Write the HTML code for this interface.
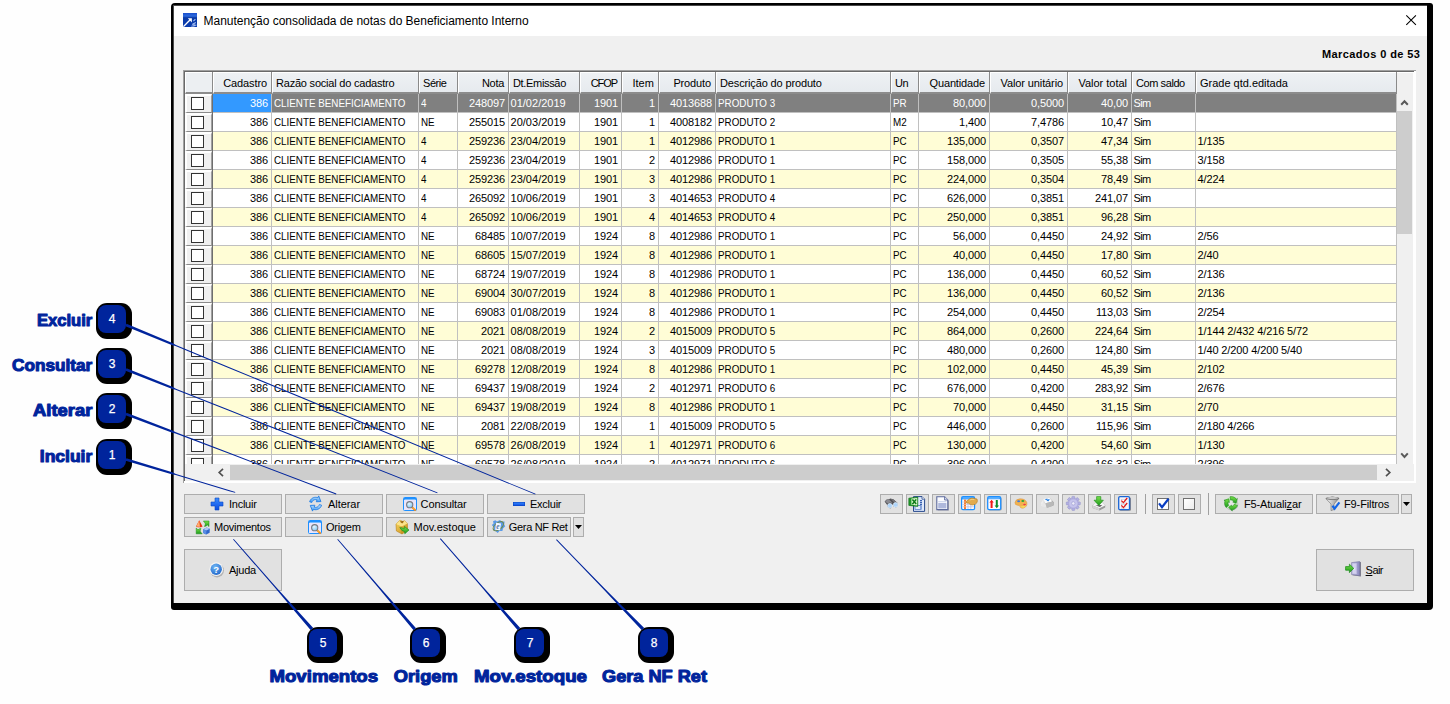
<!DOCTYPE html>
<html lang="pt-BR">
<head>
<meta charset="utf-8">
<title>Manutenção consolidada de notas do Beneficiamento Interno</title>
<style>
*{box-sizing:border-box;margin:0;padding:0}
html,body{width:1450px;height:704px;overflow:hidden;background:#fefefe}
body{position:relative;font-family:"Liberation Sans",sans-serif;font-size:11px;color:#000}
.abs{position:absolute}
/* window */
#win{position:absolute;left:171px;top:3px;width:1262px;height:607px;background:#000;border-radius:4px 3px 4px 3px}
#client{position:absolute;left:174px;top:6px;width:1253px;height:597px;background:#f0f0f0}
#tbar{position:absolute;left:174px;top:6px;width:1253px;height:30px;background:#fff}
#title{position:absolute;left:203.5px;top:14px;font-size:12px;line-height:15px;white-space:nowrap;letter-spacing:-0.02px}
#marc{position:absolute;right:30px;top:47px;font-weight:bold;font-size:11px;line-height:14px;white-space:nowrap;letter-spacing:0.42px;margin-right:-0.4px}
/* grid frame */
#gframe{position:absolute;left:183px;top:70px;width:1233px;height:413px;background:#fff;border-top:1px solid #a0a0a0;border-left:1px solid #a0a0a0}
#gframe2{position:absolute;left:184px;top:71px;width:1230px;height:410px;border-top:1px solid #696969;border-left:1px solid #696969;background:#fff}
.grid{position:absolute;left:185px;top:72px;width:1212px;height:392px;overflow:hidden;background:#fff}
.hd{position:absolute;top:0;height:22px;background:linear-gradient(#eef1f4,#e6eaee);border-left:1px solid #fff;border-top:1px solid #fff;border-bottom:2px solid #8c8c8c;line-height:20px;white-space:nowrap;overflow:hidden;padding:0 3px;letter-spacing:-0.2px}
.hd.r{text-align:right;padding-right:4px}
.hd.ind{background:#eceff2}
.hs{position:absolute;top:0;width:1px;height:22px;background:#8a8a8a}
.row{position:absolute;left:0;width:1211px;height:19px;border-bottom:1px solid #c0c0c0}
.row.yl{background:#fffdd6}
.row.wh{background:#fff}
.row.sel{background:#808080;color:#fff}
.c{position:absolute;top:0;height:18px;line-height:18px;white-space:nowrap;overflow:hidden;border-right:0;padding:0 2px 0 1.5px}
.c::after{content:"";position:absolute;right:-1px;top:0;width:1px;height:19px;background:#c0c0c0}
.row .c{overflow:visible}
.c.r{text-align:right;padding-right:3px}
.c.u{letter-spacing:0}
.c.u b{font-weight:normal;display:inline-block;transform-origin:0 50%;transform:scaleX(.893)}
.c.n{letter-spacing:-0.12px}
.c.d{letter-spacing:0.02px}
.c.m{letter-spacing:-0.65px}
.c.cad{background:#3399ff}
.ic{position:absolute;left:0;top:0;width:27px;height:19px;background:#f0f0f0;border-left:2px solid #fff;border-top:2px solid #fff;border-right:1px solid #a0a0a0;border-bottom:1px solid #8a8a8a}
.ic i{position:absolute;left:4px;top:1px;width:13px;height:13px;border:1px solid #333;background:#fff}
.ic::after{content:"";position:absolute;left:25px;top:-2px;width:1px;height:19px;background:#6e6e6e}
/* scrollbars */
#vs{position:absolute;left:1397px;top:73px;width:16px;height:391px;background:#f0f0f0}
#vth{position:absolute;left:1397px;top:111px;width:15px;height:123px;background:#cdcdcd}
#hs{position:absolute;left:185px;top:464px;width:1229px;height:17px;background:#f0f0f0}
#hth{position:absolute;left:230px;top:465px;width:1147px;height:15px;background:#cdcdcd}
/* buttons */
.b{position:absolute;height:20px;background:#e1e1e1;border:1px solid #adadad;white-space:nowrap;line-height:18px;text-align:center;letter-spacing:-0.25px}
.b.big{height:42px;line-height:40px}
.sep{position:absolute;top:494px;width:1px;height:20px;background:#a0a0a0}
svg{position:absolute;overflow:visible}
.lbl{position:absolute;font-weight:bold;font-size:18px;line-height:20px;color:#00249c;white-space:nowrap;letter-spacing:-1px;-webkit-text-stroke:0.9px #00249c}

.t{position:absolute;font-size:11px;line-height:14px;white-space:nowrap;letter-spacing:-0.25px;color:#000}
.t u{text-decoration:underline;text-underline-offset:1px}
.bdg{position:absolute;width:36px;height:36px}
.bsh{position:absolute;left:0;top:0;width:36px;height:36px;background:#000;border-radius:11px}
.bbl{position:absolute;left:2px;top:2px;width:28px;height:28px;background:#00249c;border-radius:8px;color:#fff;font-size:12px;line-height:29px;text-align:center;-webkit-text-stroke:0.25px #fff}
.lbl.c{text-align:center}
</style>
</head>
<body>
<div id="win"></div>
<div id="client"></div>
<div id="tbar"></div>
<div class="abs" style="left:173px;top:5px;width:1px;height:598px;background:#4a4a4a"></div>
<div class="abs" style="left:174px;top:5px;width:1253px;height:1px;background:#4a4a4a"></div>
<svg style="left:183px;top:13px" width="14" height="14" viewBox="0 0 14 14"><defs><linearGradient id="gt" x1="0" y1="0" x2="0" y2="1"><stop offset="0" stop-color="#1a4fcc"/><stop offset=".22" stop-color="#2e6ade"/><stop offset=".34" stop-color="#0b3aa6"/><stop offset="1" stop-color="#0a3cae"/></linearGradient></defs><path d="M0 0 H14 V14 H1.2 L0 12.8 Z" fill="url(#gt)"/><path d="M0.8 13.2 L7.2 6.8" stroke="#fff" stroke-width="1.3"/><path d="M4.8 5.2 H8.9 V9.4 Z" fill="#fff"/><path d="M10.4 8.2 L12.4 6.2 M9.2 11.4 L12.8 9.6 M8.4 13.2 L13.4 12 M11 10 V13.6" stroke="#a9c2f2" stroke-width="1.1"/></svg>
<div id="title">Manutenção consolidada de notas do Beneficiamento Interno</div>
<svg style="left:1406px;top:15px" width="10" height="10" viewBox="0 0 10 10"><path d="M0.3 0.3 L9.9 9.9 M9.9 0.3 L0.3 9.9" stroke="#000" stroke-width="1.05" fill="none"/></svg>
<div id="marc">Marcados 0 de 53</div>
<div id="gframe"></div>
<div id="gframe2"></div>
<div class="grid">
<div class="hd ind" style="left:0;width:27px"></div>
<div class="hs" style="left:27px"></div>
<div class="hd r" style="left:28px;width:58px;letter-spacing:-0.10px"><span>Cadastro</span></div>
<div class="hs" style="left:86px"></div>
<div class="hd l" style="left:87px;width:146px;letter-spacing:-0.21px"><span>Razão social do cadastro</span></div>
<div class="hs" style="left:233px"></div>
<div class="hd l" style="left:234px;width:38px;letter-spacing:-0.46px"><span>Série</span></div>
<div class="hs" style="left:272px"></div>
<div class="hd r" style="left:273px;width:50px;letter-spacing:-0.30px"><span>Nota</span></div>
<div class="hs" style="left:323px"></div>
<div class="hd l" style="left:324px;width:70px;letter-spacing:-0.33px"><span>Dt.Emissão</span></div>
<div class="hs" style="left:394px"></div>
<div class="hd r" style="left:395px;width:41px;letter-spacing:-1.05px"><span>CFOP</span></div>
<div class="hs" style="left:436px"></div>
<div class="hd r" style="left:437px;width:36px;letter-spacing:0.05px"><span>Item</span></div>
<div class="hs" style="left:473px"></div>
<div class="hd r" style="left:474px;width:56px;letter-spacing:-0.13px"><span>Produto</span></div>
<div class="hs" style="left:530px"></div>
<div class="hd l" style="left:531px;width:174px;letter-spacing:-0.14px"><span>Descrição do produto</span></div>
<div class="hs" style="left:705px"></div>
<div class="hd l" style="left:706px;width:27px;letter-spacing:-0.45px"><span>Un</span></div>
<div class="hs" style="left:733px"></div>
<div class="hd r" style="left:734px;width:70px;letter-spacing:-0.14px"><span>Quantidade</span></div>
<div class="hs" style="left:804px"></div>
<div class="hd r" style="left:805px;width:77px;letter-spacing:-0.11px"><span>Valor unitário</span></div>
<div class="hs" style="left:882px"></div>
<div class="hd r" style="left:883px;width:63px;letter-spacing:-0.01px"><span>Valor total</span></div>
<div class="hs" style="left:946px"></div>
<div class="hd l" style="left:947px;width:63px;letter-spacing:-0.42px"><span>Com saldo</span></div>
<div class="hs" style="left:1010px"></div>
<div class="hd l" style="left:1011px;width:200px;letter-spacing:-0.01px"><span>Grade qtd.editada</span></div>
<div class="hs" style="left:1211px"></div>
<div class="row sel" style="top:22px">
<div class="ic"><i></i></div>
<div class="c r n cad" style="left:28px;width:58px">386</div>
<div class="c l u" style="left:87px;width:146px"><b>CLIENTE BENEFICIAMENTO</b></div>
<div class="c l u" style="left:234px;width:38px"><b>4</b></div>
<div class="c r n" style="left:273px;width:50px">248097</div>
<div class="c l d" style="left:324px;width:70px">01/02/2019</div>
<div class="c r n" style="left:395px;width:41px">1901</div>
<div class="c r n" style="left:437px;width:36px">1</div>
<div class="c r n" style="left:474px;width:56px">4013688</div>
<div class="c l u" style="left:531px;width:174px"><b>PRODUTO 3</b></div>
<div class="c l u" style="left:706px;width:27px"><b>PR</b></div>
<div class="c r n" style="left:734px;width:70px">80,000</div>
<div class="c r n" style="left:805px;width:77px">0,5000</div>
<div class="c r n" style="left:883px;width:63px">40,00</div>
<div class="c l m" style="left:947px;width:63px">Sim</div>
<div class="c l n" style="left:1011px;width:200px"></div>
</div>
<div class="row wh" style="top:41px">
<div class="ic"><i></i></div>
<div class="c r n" style="left:28px;width:58px">386</div>
<div class="c l u" style="left:87px;width:146px"><b>CLIENTE BENEFICIAMENTO</b></div>
<div class="c l u" style="left:234px;width:38px"><b>NE</b></div>
<div class="c r n" style="left:273px;width:50px">255015</div>
<div class="c l d" style="left:324px;width:70px">20/03/2019</div>
<div class="c r n" style="left:395px;width:41px">1901</div>
<div class="c r n" style="left:437px;width:36px">1</div>
<div class="c r n" style="left:474px;width:56px">4008182</div>
<div class="c l u" style="left:531px;width:174px"><b>PRODUTO 2</b></div>
<div class="c l u" style="left:706px;width:27px"><b>M2</b></div>
<div class="c r n" style="left:734px;width:70px">1,400</div>
<div class="c r n" style="left:805px;width:77px">7,4786</div>
<div class="c r n" style="left:883px;width:63px">10,47</div>
<div class="c l m" style="left:947px;width:63px">Sim</div>
<div class="c l n" style="left:1011px;width:200px"></div>
</div>
<div class="row yl" style="top:60px">
<div class="ic"><i></i></div>
<div class="c r n" style="left:28px;width:58px">386</div>
<div class="c l u" style="left:87px;width:146px"><b>CLIENTE BENEFICIAMENTO</b></div>
<div class="c l u" style="left:234px;width:38px"><b>4</b></div>
<div class="c r n" style="left:273px;width:50px">259236</div>
<div class="c l d" style="left:324px;width:70px">23/04/2019</div>
<div class="c r n" style="left:395px;width:41px">1901</div>
<div class="c r n" style="left:437px;width:36px">1</div>
<div class="c r n" style="left:474px;width:56px">4012986</div>
<div class="c l u" style="left:531px;width:174px"><b>PRODUTO 1</b></div>
<div class="c l u" style="left:706px;width:27px"><b>PC</b></div>
<div class="c r n" style="left:734px;width:70px">135,000</div>
<div class="c r n" style="left:805px;width:77px">0,3507</div>
<div class="c r n" style="left:883px;width:63px">47,34</div>
<div class="c l m" style="left:947px;width:63px">Sim</div>
<div class="c l n" style="left:1011px;width:200px">1/135</div>
</div>
<div class="row wh" style="top:79px">
<div class="ic"><i></i></div>
<div class="c r n" style="left:28px;width:58px">386</div>
<div class="c l u" style="left:87px;width:146px"><b>CLIENTE BENEFICIAMENTO</b></div>
<div class="c l u" style="left:234px;width:38px"><b>4</b></div>
<div class="c r n" style="left:273px;width:50px">259236</div>
<div class="c l d" style="left:324px;width:70px">23/04/2019</div>
<div class="c r n" style="left:395px;width:41px">1901</div>
<div class="c r n" style="left:437px;width:36px">2</div>
<div class="c r n" style="left:474px;width:56px">4012986</div>
<div class="c l u" style="left:531px;width:174px"><b>PRODUTO 1</b></div>
<div class="c l u" style="left:706px;width:27px"><b>PC</b></div>
<div class="c r n" style="left:734px;width:70px">158,000</div>
<div class="c r n" style="left:805px;width:77px">0,3505</div>
<div class="c r n" style="left:883px;width:63px">55,38</div>
<div class="c l m" style="left:947px;width:63px">Sim</div>
<div class="c l n" style="left:1011px;width:200px">3/158</div>
</div>
<div class="row yl" style="top:98px">
<div class="ic"><i></i></div>
<div class="c r n" style="left:28px;width:58px">386</div>
<div class="c l u" style="left:87px;width:146px"><b>CLIENTE BENEFICIAMENTO</b></div>
<div class="c l u" style="left:234px;width:38px"><b>4</b></div>
<div class="c r n" style="left:273px;width:50px">259236</div>
<div class="c l d" style="left:324px;width:70px">23/04/2019</div>
<div class="c r n" style="left:395px;width:41px">1901</div>
<div class="c r n" style="left:437px;width:36px">3</div>
<div class="c r n" style="left:474px;width:56px">4012986</div>
<div class="c l u" style="left:531px;width:174px"><b>PRODUTO 1</b></div>
<div class="c l u" style="left:706px;width:27px"><b>PC</b></div>
<div class="c r n" style="left:734px;width:70px">224,000</div>
<div class="c r n" style="left:805px;width:77px">0,3504</div>
<div class="c r n" style="left:883px;width:63px">78,49</div>
<div class="c l m" style="left:947px;width:63px">Sim</div>
<div class="c l n" style="left:1011px;width:200px">4/224</div>
</div>
<div class="row wh" style="top:117px">
<div class="ic"><i></i></div>
<div class="c r n" style="left:28px;width:58px">386</div>
<div class="c l u" style="left:87px;width:146px"><b>CLIENTE BENEFICIAMENTO</b></div>
<div class="c l u" style="left:234px;width:38px"><b>4</b></div>
<div class="c r n" style="left:273px;width:50px">265092</div>
<div class="c l d" style="left:324px;width:70px">10/06/2019</div>
<div class="c r n" style="left:395px;width:41px">1901</div>
<div class="c r n" style="left:437px;width:36px">3</div>
<div class="c r n" style="left:474px;width:56px">4014653</div>
<div class="c l u" style="left:531px;width:174px"><b>PRODUTO 4</b></div>
<div class="c l u" style="left:706px;width:27px"><b>PC</b></div>
<div class="c r n" style="left:734px;width:70px">626,000</div>
<div class="c r n" style="left:805px;width:77px">0,3851</div>
<div class="c r n" style="left:883px;width:63px">241,07</div>
<div class="c l m" style="left:947px;width:63px">Sim</div>
<div class="c l n" style="left:1011px;width:200px"></div>
</div>
<div class="row yl" style="top:136px">
<div class="ic"><i></i></div>
<div class="c r n" style="left:28px;width:58px">386</div>
<div class="c l u" style="left:87px;width:146px"><b>CLIENTE BENEFICIAMENTO</b></div>
<div class="c l u" style="left:234px;width:38px"><b>4</b></div>
<div class="c r n" style="left:273px;width:50px">265092</div>
<div class="c l d" style="left:324px;width:70px">10/06/2019</div>
<div class="c r n" style="left:395px;width:41px">1901</div>
<div class="c r n" style="left:437px;width:36px">4</div>
<div class="c r n" style="left:474px;width:56px">4014653</div>
<div class="c l u" style="left:531px;width:174px"><b>PRODUTO 4</b></div>
<div class="c l u" style="left:706px;width:27px"><b>PC</b></div>
<div class="c r n" style="left:734px;width:70px">250,000</div>
<div class="c r n" style="left:805px;width:77px">0,3851</div>
<div class="c r n" style="left:883px;width:63px">96,28</div>
<div class="c l m" style="left:947px;width:63px">Sim</div>
<div class="c l n" style="left:1011px;width:200px"></div>
</div>
<div class="row wh" style="top:155px">
<div class="ic"><i></i></div>
<div class="c r n" style="left:28px;width:58px">386</div>
<div class="c l u" style="left:87px;width:146px"><b>CLIENTE BENEFICIAMENTO</b></div>
<div class="c l u" style="left:234px;width:38px"><b>NE</b></div>
<div class="c r n" style="left:273px;width:50px">68485</div>
<div class="c l d" style="left:324px;width:70px">10/07/2019</div>
<div class="c r n" style="left:395px;width:41px">1924</div>
<div class="c r n" style="left:437px;width:36px">8</div>
<div class="c r n" style="left:474px;width:56px">4012986</div>
<div class="c l u" style="left:531px;width:174px"><b>PRODUTO 1</b></div>
<div class="c l u" style="left:706px;width:27px"><b>PC</b></div>
<div class="c r n" style="left:734px;width:70px">56,000</div>
<div class="c r n" style="left:805px;width:77px">0,4450</div>
<div class="c r n" style="left:883px;width:63px">24,92</div>
<div class="c l m" style="left:947px;width:63px">Sim</div>
<div class="c l n" style="left:1011px;width:200px">2/56</div>
</div>
<div class="row yl" style="top:174px">
<div class="ic"><i></i></div>
<div class="c r n" style="left:28px;width:58px">386</div>
<div class="c l u" style="left:87px;width:146px"><b>CLIENTE BENEFICIAMENTO</b></div>
<div class="c l u" style="left:234px;width:38px"><b>NE</b></div>
<div class="c r n" style="left:273px;width:50px">68605</div>
<div class="c l d" style="left:324px;width:70px">15/07/2019</div>
<div class="c r n" style="left:395px;width:41px">1924</div>
<div class="c r n" style="left:437px;width:36px">8</div>
<div class="c r n" style="left:474px;width:56px">4012986</div>
<div class="c l u" style="left:531px;width:174px"><b>PRODUTO 1</b></div>
<div class="c l u" style="left:706px;width:27px"><b>PC</b></div>
<div class="c r n" style="left:734px;width:70px">40,000</div>
<div class="c r n" style="left:805px;width:77px">0,4450</div>
<div class="c r n" style="left:883px;width:63px">17,80</div>
<div class="c l m" style="left:947px;width:63px">Sim</div>
<div class="c l n" style="left:1011px;width:200px">2/40</div>
</div>
<div class="row wh" style="top:193px">
<div class="ic"><i></i></div>
<div class="c r n" style="left:28px;width:58px">386</div>
<div class="c l u" style="left:87px;width:146px"><b>CLIENTE BENEFICIAMENTO</b></div>
<div class="c l u" style="left:234px;width:38px"><b>NE</b></div>
<div class="c r n" style="left:273px;width:50px">68724</div>
<div class="c l d" style="left:324px;width:70px">19/07/2019</div>
<div class="c r n" style="left:395px;width:41px">1924</div>
<div class="c r n" style="left:437px;width:36px">8</div>
<div class="c r n" style="left:474px;width:56px">4012986</div>
<div class="c l u" style="left:531px;width:174px"><b>PRODUTO 1</b></div>
<div class="c l u" style="left:706px;width:27px"><b>PC</b></div>
<div class="c r n" style="left:734px;width:70px">136,000</div>
<div class="c r n" style="left:805px;width:77px">0,4450</div>
<div class="c r n" style="left:883px;width:63px">60,52</div>
<div class="c l m" style="left:947px;width:63px">Sim</div>
<div class="c l n" style="left:1011px;width:200px">2/136</div>
</div>
<div class="row yl" style="top:212px">
<div class="ic"><i></i></div>
<div class="c r n" style="left:28px;width:58px">386</div>
<div class="c l u" style="left:87px;width:146px"><b>CLIENTE BENEFICIAMENTO</b></div>
<div class="c l u" style="left:234px;width:38px"><b>NE</b></div>
<div class="c r n" style="left:273px;width:50px">69004</div>
<div class="c l d" style="left:324px;width:70px">30/07/2019</div>
<div class="c r n" style="left:395px;width:41px">1924</div>
<div class="c r n" style="left:437px;width:36px">8</div>
<div class="c r n" style="left:474px;width:56px">4012986</div>
<div class="c l u" style="left:531px;width:174px"><b>PRODUTO 1</b></div>
<div class="c l u" style="left:706px;width:27px"><b>PC</b></div>
<div class="c r n" style="left:734px;width:70px">136,000</div>
<div class="c r n" style="left:805px;width:77px">0,4450</div>
<div class="c r n" style="left:883px;width:63px">60,52</div>
<div class="c l m" style="left:947px;width:63px">Sim</div>
<div class="c l n" style="left:1011px;width:200px">2/136</div>
</div>
<div class="row wh" style="top:231px">
<div class="ic"><i></i></div>
<div class="c r n" style="left:28px;width:58px">386</div>
<div class="c l u" style="left:87px;width:146px"><b>CLIENTE BENEFICIAMENTO</b></div>
<div class="c l u" style="left:234px;width:38px"><b>NE</b></div>
<div class="c r n" style="left:273px;width:50px">69083</div>
<div class="c l d" style="left:324px;width:70px">01/08/2019</div>
<div class="c r n" style="left:395px;width:41px">1924</div>
<div class="c r n" style="left:437px;width:36px">8</div>
<div class="c r n" style="left:474px;width:56px">4012986</div>
<div class="c l u" style="left:531px;width:174px"><b>PRODUTO 1</b></div>
<div class="c l u" style="left:706px;width:27px"><b>PC</b></div>
<div class="c r n" style="left:734px;width:70px">254,000</div>
<div class="c r n" style="left:805px;width:77px">0,4450</div>
<div class="c r n" style="left:883px;width:63px">113,03</div>
<div class="c l m" style="left:947px;width:63px">Sim</div>
<div class="c l n" style="left:1011px;width:200px">2/254</div>
</div>
<div class="row yl" style="top:250px">
<div class="ic"><i></i></div>
<div class="c r n" style="left:28px;width:58px">386</div>
<div class="c l u" style="left:87px;width:146px"><b>CLIENTE BENEFICIAMENTO</b></div>
<div class="c l u" style="left:234px;width:38px"><b>NE</b></div>
<div class="c r n" style="left:273px;width:50px">2021</div>
<div class="c l d" style="left:324px;width:70px">08/08/2019</div>
<div class="c r n" style="left:395px;width:41px">1924</div>
<div class="c r n" style="left:437px;width:36px">2</div>
<div class="c r n" style="left:474px;width:56px">4015009</div>
<div class="c l u" style="left:531px;width:174px"><b>PRODUTO 5</b></div>
<div class="c l u" style="left:706px;width:27px"><b>PC</b></div>
<div class="c r n" style="left:734px;width:70px">864,000</div>
<div class="c r n" style="left:805px;width:77px">0,2600</div>
<div class="c r n" style="left:883px;width:63px">224,64</div>
<div class="c l m" style="left:947px;width:63px">Sim</div>
<div class="c l n" style="left:1011px;width:200px">1/144 2/432 4/216 5/72</div>
</div>
<div class="row wh" style="top:269px">
<div class="ic"><i></i></div>
<div class="c r n" style="left:28px;width:58px">386</div>
<div class="c l u" style="left:87px;width:146px"><b>CLIENTE BENEFICIAMENTO</b></div>
<div class="c l u" style="left:234px;width:38px"><b>NE</b></div>
<div class="c r n" style="left:273px;width:50px">2021</div>
<div class="c l d" style="left:324px;width:70px">08/08/2019</div>
<div class="c r n" style="left:395px;width:41px">1924</div>
<div class="c r n" style="left:437px;width:36px">3</div>
<div class="c r n" style="left:474px;width:56px">4015009</div>
<div class="c l u" style="left:531px;width:174px"><b>PRODUTO 5</b></div>
<div class="c l u" style="left:706px;width:27px"><b>PC</b></div>
<div class="c r n" style="left:734px;width:70px">480,000</div>
<div class="c r n" style="left:805px;width:77px">0,2600</div>
<div class="c r n" style="left:883px;width:63px">124,80</div>
<div class="c l m" style="left:947px;width:63px">Sim</div>
<div class="c l n" style="left:1011px;width:200px">1/40 2/200 4/200 5/40</div>
</div>
<div class="row yl" style="top:288px">
<div class="ic"><i></i></div>
<div class="c r n" style="left:28px;width:58px">386</div>
<div class="c l u" style="left:87px;width:146px"><b>CLIENTE BENEFICIAMENTO</b></div>
<div class="c l u" style="left:234px;width:38px"><b>NE</b></div>
<div class="c r n" style="left:273px;width:50px">69278</div>
<div class="c l d" style="left:324px;width:70px">12/08/2019</div>
<div class="c r n" style="left:395px;width:41px">1924</div>
<div class="c r n" style="left:437px;width:36px">8</div>
<div class="c r n" style="left:474px;width:56px">4012986</div>
<div class="c l u" style="left:531px;width:174px"><b>PRODUTO 1</b></div>
<div class="c l u" style="left:706px;width:27px"><b>PC</b></div>
<div class="c r n" style="left:734px;width:70px">102,000</div>
<div class="c r n" style="left:805px;width:77px">0,4450</div>
<div class="c r n" style="left:883px;width:63px">45,39</div>
<div class="c l m" style="left:947px;width:63px">Sim</div>
<div class="c l n" style="left:1011px;width:200px">2/102</div>
</div>
<div class="row wh" style="top:307px">
<div class="ic"><i></i></div>
<div class="c r n" style="left:28px;width:58px">386</div>
<div class="c l u" style="left:87px;width:146px"><b>CLIENTE BENEFICIAMENTO</b></div>
<div class="c l u" style="left:234px;width:38px"><b>NE</b></div>
<div class="c r n" style="left:273px;width:50px">69437</div>
<div class="c l d" style="left:324px;width:70px">19/08/2019</div>
<div class="c r n" style="left:395px;width:41px">1924</div>
<div class="c r n" style="left:437px;width:36px">2</div>
<div class="c r n" style="left:474px;width:56px">4012971</div>
<div class="c l u" style="left:531px;width:174px"><b>PRODUTO 6</b></div>
<div class="c l u" style="left:706px;width:27px"><b>PC</b></div>
<div class="c r n" style="left:734px;width:70px">676,000</div>
<div class="c r n" style="left:805px;width:77px">0,4200</div>
<div class="c r n" style="left:883px;width:63px">283,92</div>
<div class="c l m" style="left:947px;width:63px">Sim</div>
<div class="c l n" style="left:1011px;width:200px">2/676</div>
</div>
<div class="row yl" style="top:326px">
<div class="ic"><i></i></div>
<div class="c r n" style="left:28px;width:58px">386</div>
<div class="c l u" style="left:87px;width:146px"><b>CLIENTE BENEFICIAMENTO</b></div>
<div class="c l u" style="left:234px;width:38px"><b>NE</b></div>
<div class="c r n" style="left:273px;width:50px">69437</div>
<div class="c l d" style="left:324px;width:70px">19/08/2019</div>
<div class="c r n" style="left:395px;width:41px">1924</div>
<div class="c r n" style="left:437px;width:36px">8</div>
<div class="c r n" style="left:474px;width:56px">4012986</div>
<div class="c l u" style="left:531px;width:174px"><b>PRODUTO 1</b></div>
<div class="c l u" style="left:706px;width:27px"><b>PC</b></div>
<div class="c r n" style="left:734px;width:70px">70,000</div>
<div class="c r n" style="left:805px;width:77px">0,4450</div>
<div class="c r n" style="left:883px;width:63px">31,15</div>
<div class="c l m" style="left:947px;width:63px">Sim</div>
<div class="c l n" style="left:1011px;width:200px">2/70</div>
</div>
<div class="row wh" style="top:345px">
<div class="ic"><i></i></div>
<div class="c r n" style="left:28px;width:58px">386</div>
<div class="c l u" style="left:87px;width:146px"><b>CLIENTE BENEFICIAMENTO</b></div>
<div class="c l u" style="left:234px;width:38px"><b>NE</b></div>
<div class="c r n" style="left:273px;width:50px">2081</div>
<div class="c l d" style="left:324px;width:70px">22/08/2019</div>
<div class="c r n" style="left:395px;width:41px">1924</div>
<div class="c r n" style="left:437px;width:36px">1</div>
<div class="c r n" style="left:474px;width:56px">4015009</div>
<div class="c l u" style="left:531px;width:174px"><b>PRODUTO 5</b></div>
<div class="c l u" style="left:706px;width:27px"><b>PC</b></div>
<div class="c r n" style="left:734px;width:70px">446,000</div>
<div class="c r n" style="left:805px;width:77px">0,2600</div>
<div class="c r n" style="left:883px;width:63px">115,96</div>
<div class="c l m" style="left:947px;width:63px">Sim</div>
<div class="c l n" style="left:1011px;width:200px">2/180 4/266</div>
</div>
<div class="row yl" style="top:364px">
<div class="ic"><i></i></div>
<div class="c r n" style="left:28px;width:58px">386</div>
<div class="c l u" style="left:87px;width:146px"><b>CLIENTE BENEFICIAMENTO</b></div>
<div class="c l u" style="left:234px;width:38px"><b>NE</b></div>
<div class="c r n" style="left:273px;width:50px">69578</div>
<div class="c l d" style="left:324px;width:70px">26/08/2019</div>
<div class="c r n" style="left:395px;width:41px">1924</div>
<div class="c r n" style="left:437px;width:36px">1</div>
<div class="c r n" style="left:474px;width:56px">4012971</div>
<div class="c l u" style="left:531px;width:174px"><b>PRODUTO 6</b></div>
<div class="c l u" style="left:706px;width:27px"><b>PC</b></div>
<div class="c r n" style="left:734px;width:70px">130,000</div>
<div class="c r n" style="left:805px;width:77px">0,4200</div>
<div class="c r n" style="left:883px;width:63px">54,60</div>
<div class="c l m" style="left:947px;width:63px">Sim</div>
<div class="c l n" style="left:1011px;width:200px">1/130</div>
</div>
<div class="row wh" style="top:383px">
<div class="ic"><i></i></div>
<div class="c r n" style="left:28px;width:58px">386</div>
<div class="c l u" style="left:87px;width:146px"><b>CLIENTE BENEFICIAMENTO</b></div>
<div class="c l u" style="left:234px;width:38px"><b>NE</b></div>
<div class="c r n" style="left:273px;width:50px">69578</div>
<div class="c l d" style="left:324px;width:70px">26/08/2019</div>
<div class="c r n" style="left:395px;width:41px">1924</div>
<div class="c r n" style="left:437px;width:36px">2</div>
<div class="c r n" style="left:474px;width:56px">4012971</div>
<div class="c l u" style="left:531px;width:174px"><b>PRODUTO 6</b></div>
<div class="c l u" style="left:706px;width:27px"><b>PC</b></div>
<div class="c r n" style="left:734px;width:70px">396,000</div>
<div class="c r n" style="left:805px;width:77px">0,4200</div>
<div class="c r n" style="left:883px;width:63px">166,32</div>
<div class="c l m" style="left:947px;width:63px">Sim</div>
<div class="c l n" style="left:1011px;width:200px">2/396</div>
</div>
</div>
<div id="vs"></div><div id="vth"></div>
<div id="hs"></div><div id="hth"></div>
<svg width="0" height="0" style="position:absolute"><defs>
<linearGradient id="gb" x1="0" y1="0" x2="0" y2="1"><stop offset="0" stop-color="#3a8cff"/><stop offset="1" stop-color="#0a4be0"/></linearGradient>
<linearGradient id="gg" x1="0" y1="0" x2="0" y2="1"><stop offset="0" stop-color="#7be04a"/><stop offset="1" stop-color="#1d9a1d"/></linearGradient>
<radialGradient id="gl" cx=".4" cy=".35" r=".7"><stop offset="0" stop-color="#e6f6ff"/><stop offset="1" stop-color="#7cc4f2"/></radialGradient>
<radialGradient id="gh" cx=".4" cy=".3" r=".8"><stop offset="0" stop-color="#6fb6f5"/><stop offset="1" stop-color="#1c62c8"/></radialGradient>
<linearGradient id="gy" x1="0" y1="0" x2="1" y2="1"><stop offset="0" stop-color="#f8d860"/><stop offset="1" stop-color="#c88a18"/></linearGradient>
<linearGradient id="gs" x1="0" y1="0" x2="1" y2="0"><stop offset="0" stop-color="#fafafa"/><stop offset="1" stop-color="#8c8c8c"/></linearGradient>
<g id="mag"><rect x=".5" y=".5" width="13" height="13" rx="1" fill="#e9e5fb" stroke="#1e90ff"/><rect x="1" y="1" width="12" height="2" fill="#1e90ff"/><rect x="1.5" y="2" width="11" height=".8" fill="#8fc8ff"/><path d="M8.6 9.6 L12 13" stroke="#f08a1c" stroke-width="2" stroke-linecap="round"/><path d="M9.6 10.2 L11.6 12.2" stroke="#ffd84a" stroke-width=".8"/><circle cx="6.7" cy="7.7" r="3.1" fill="url(#gl)" stroke="#7a7a82" stroke-width="1.1"/></g>
<g id="dd"><path d="M0 0 H7 L3.5 4 Z" fill="#000"/></g>
</defs></svg>

<!-- row 1 buttons -->
<div class="b" style="left:184px;top:494px;width:98px"></div>
<svg style="left:211px;top:498px" width="12" height="12"><path d="M4 0 H8 V4 H12 V8 H8 V12 H4 V8 H0 V4 H4 Z" fill="url(#gb)" stroke="#0b47c4" stroke-width=".6"/></svg>
<div class="t" style="left:229px;top:497px">Incluir</div>

<div class="b" style="left:285px;top:494px;width:98px"></div>
<svg style="left:307.5px;top:496px" width="16" height="15" viewBox="0 0 16 15"><defs><linearGradient id="ga" x1="0" y1="0" x2="0" y2="1"><stop offset="0" stop-color="#c6e6ff"/><stop offset="1" stop-color="#3a96f2"/></linearGradient></defs><path d="M1.64 5.79 L1.94 4.98 L2.34 4.21 L2.85 3.51 L3.45 2.89 L4.13 2.36 L4.88 1.93 L5.68 1.60 L6.52 1.39 L7.38 1.30 L8.25 1.33 L9.10 1.48 L9.92 1.75 L10.67 -0.10 L12.91 5.57 L8.31 5.74 L9.06 3.88 L8.54 3.72 L8.01 3.62 L7.46 3.60 L6.92 3.66 L6.39 3.79 L5.89 3.99 L5.42 4.27 L4.99 4.60 L4.61 4.99 L4.29 5.43 L4.04 5.91 L3.85 6.43 Z" fill="url(#ga)" stroke="#1f7de4" stroke-width=".9" stroke-linejoin="round"/><path d="M13.56 9.21 L13.26 10.02 L12.86 10.79 L12.35 11.49 L11.75 12.11 L11.07 12.64 L10.32 13.07 L9.52 13.40 L8.68 13.61 L7.82 13.70 L6.95 13.67 L6.10 13.52 L5.28 13.25 L4.53 15.10 L2.29 9.43 L6.89 9.26 L6.14 11.12 L6.66 11.28 L7.19 11.38 L7.74 11.40 L8.28 11.34 L8.81 11.21 L9.31 11.01 L9.78 10.73 L10.21 10.40 L10.59 10.01 L10.91 9.57 L11.16 9.09 L11.35 8.57 Z" fill="url(#ga)" stroke="#1f7de4" stroke-width=".9" stroke-linejoin="round"/></svg>
<div class="t" style="left:328px;top:497px;letter-spacing:-0.05px">Alterar</div>

<div class="b" style="left:386px;top:494px;width:98px"></div>
<svg style="left:403px;top:497px" width="14" height="14"><use href="#mag"/></svg>
<div class="t" style="left:420.6px;top:497px;letter-spacing:-0.13px">Consultar</div>

<div class="b" style="left:487px;top:494px;width:98px"></div>
<svg style="left:513px;top:502px" width="12" height="4"><rect width="12" height="4" fill="url(#gb)"/><rect x=".3" y=".3" width="11.4" height="3.4" fill="none" stroke="#0b47c4" stroke-width=".6"/></svg>
<div class="t" style="left:530px;top:497px">Excluir</div>

<!-- row 2 buttons -->
<div class="b" style="left:184px;top:517px;width:98px"></div>
<svg style="left:195px;top:520px" width="16" height="15" viewBox="0 0 16 15"><path d="M4.2 0.3 L7.6 6.4 Q4.4 8.2 1 6.4 Z" fill="#ea3410"/><path d="M4.2 0.6 L5 6.8 Q3 7 1.4 6.3 Z" fill="#ffb070"/><path d="M8.4 1 H14 V6.6 L12.4 5 Q11 6.6 9.4 6.4 Q10.6 5 10.2 3.2 Z" fill="url(#gg)" stroke="#148a14" stroke-width=".5"/><path d="M7.2 13.8 H1.2 V8 L3 9.8 Q4.4 8.4 6 8.6 Q4.8 10 5.4 11.8 Z" fill="url(#gg)" stroke="#148a14" stroke-width=".5"/><path d="M8.2 9.2 L11.6 7.6 L14.8 8.8 L14.6 12.8 L11.2 14.4 L8.2 13 Z" fill="#2f66cc"/><path d="M8.2 9.2 L11.6 7.6 L14.8 8.8 L11.4 10.4 Z" fill="#a9c8f8"/><path d="M8.2 9.2 L11.4 10.4 L11.2 14.4 L8.2 13Z" fill="#5a8ee4"/></svg>
<div class="t" style="left:214px;top:520px">Movimentos</div>

<div class="b" style="left:285px;top:517px;width:98px"></div>
<svg style="left:308px;top:520px" width="14" height="14"><use href="#mag"/></svg>
<div class="t" style="left:326px;top:520px">Origem</div>

<div class="b" style="left:386px;top:517px;width:98px"></div>
<svg style="left:395px;top:519px" width="16" height="16" viewBox="0 0 16 16"><path d="M1 5 L5 1.2 L8 2.6 L9.4 1.6 L12.4 4.6 L12.6 11.4 L7 15 L1.4 12 Z" fill="url(#gy)" stroke="#b8801a" stroke-width=".6"/><path d="M1 5 L6.6 7.6 L12.4 4.6 L9.4 1.6 L7.4 3.4 L5 1.2Z" fill="#fbe48a"/><path d="M4.6 2.4 L7.2 4.6 L9 2.6 L7.6 2 Z" fill="#9a6a10"/><path d="M6.6 7.6 L7 15" stroke="#b8801a" stroke-width=".6"/><path d="M4.8 8.6 Q8 9.2 9.4 9.4 L9.4 7.4 L14 11 L9.8 14.8 L9.6 12.6 Q7 12.6 4.8 8.6 Z" fill="url(#gg)" stroke="#0f8a1a" stroke-width=".6"/></svg>
<div class="t" style="left:413.5px;top:520px;letter-spacing:0.03px">Mov.estoque</div>

<div class="b" style="left:487px;top:517px;width:84px"></div>
<svg style="left:491px;top:519px" width="15" height="15" viewBox="0 0 15 15"><path d="M2 2.2 L4.4 1.2 L6 2.4 L9 1 L10.6 2.4 L13.6 2.6 L13.2 5.6 L14.2 7.2 L12 9.4 L11.4 12 L8.4 12 L6.8 14 L4.4 12 L2.4 11 L3 8.4 L0.8 6 L2.6 4.6 Z" fill="#5a9ae8"/><ellipse cx="7.3" cy="7.2" rx="6" ry="3.3" transform="rotate(-38 7.3 7.2)" fill="none" stroke="#6e8a4a" stroke-width="1.1"/><path d="M4.6 4 H9.6 V11 H4.6 Z" fill="#f4f6fb" transform="rotate(8 7 7.5)"/><text x="5.2" y="10" font-family="Liberation Serif" font-style="italic" font-weight="bold" font-size="7.5" fill="#5a7aa8">e</text></svg>
<div class="t" style="left:508.8px;top:520px;letter-spacing:-0.33px">Gera NF Ret</div>
<div class="b" style="left:573px;top:517px;width:11px"></div>
<svg style="left:575px;top:525px" width="7" height="4"><use href="#dd"/></svg>

<!-- Ajuda / Sair -->
<div class="b big" style="left:184px;top:549px;width:98px"></div>
<svg style="left:209px;top:562px" width="16" height="16" viewBox="0 0 16 16"><circle cx="8" cy="8.4" r="7" fill="#8c8c8c" opacity=".55"/><circle cx="7.2" cy="7.2" r="6.9" fill="#f4f4f4"/><circle cx="7.2" cy="7.2" r="5.7" fill="url(#gh)"/><text x="7.2" y="10.6" text-anchor="middle" font-family="Liberation Sans" font-weight="bold" font-size="9.5" fill="#fff">?</text></svg>
<div class="t" style="left:229px;top:563px">A<u>j</u>uda</div>

<div class="b big" style="left:1316px;top:549px;width:98px"></div>
<svg style="left:1345px;top:561px" width="17" height="16" viewBox="0 0 17 16"><defs><linearGradient id="gd" x1="0" y1="0" x2="1" y2="0"><stop offset="0" stop-color="#c9c7ec"/><stop offset="1" stop-color="#8886bc"/></linearGradient></defs><path d="M7.6 2 L16 1 V15.4 L7.6 14.2 Z" fill="#5e5e6e" opacity=".75"/><path d="M6.6 1.6 L14.8 0.6 V14.8 L6.6 13.6 Z" fill="url(#gd)" stroke="#74729e" stroke-width=".6"/><path d="M7.8 2.8 L11.6 2.3 V13 L7.8 12.5Z" fill="#dcdaf4" opacity=".8"/><rect x="8.4" y="6.8" width="1.1" height="2" fill="#fff"/><path d="M0.6 5.6 H4.4 V3.2 L8.8 7.4 L4.4 11.6 V9.2 H0.6 Z" fill="url(#gg)" stroke="#128a12" stroke-width=".7"/></svg>
<div class="t" style="left:1365.6px;top:563px;letter-spacing:-0.55px"><u>S</u>air</div>

<!-- toolbar -->
<div class="b" style="left:880px;top:494px;width:23px"></div>
<svg style="left:884px;top:498px" width="15" height="11" viewBox="0 0 15 11"><path d="M0.6 3.6 L2.6 1.6 L5.2 1.2 L6.2 0.6 L9.4 1.2 L13.6 5 L14 7.6 L12 9.6 L9.6 8.6 L8.6 6.6 L7.8 7.2 L8 9 L6.4 10.4 L4 9.6 L3.2 7 Z" fill="#505054"/><path d="M1.2 3.4 L2.8 2 L5.4 1.8 L8.6 5 L6 4.6 L3.6 5.6Z" fill="#8a8a90"/><path d="M6.6 1 L9.2 1.6 L12.6 4.8 L10.4 4.6 Z" fill="#77777d"/><circle cx="5.9" cy="7.7" r="2.3" fill="#aed4fa" stroke="#e4f2ff" stroke-width=".7"/><circle cx="11.6" cy="6.9" r="2.3" fill="#aed4fa" stroke="#e4f2ff" stroke-width=".7"/></svg>

<div class="b" style="left:906px;top:494px;width:23px"></div>
<svg style="left:908px;top:496px" width="18" height="16" viewBox="0 0 18 16"><path d="M5.5 0.6 H14 L16.6 3.2 V15.4 H5.5 Z" fill="#dfe9fb" stroke="#27488c" stroke-width="1"/><path d="M14 0.6 V3.2 H16.6" fill="#fff" stroke="#27488c" stroke-width=".8"/><path d="M7 9.5 H13 V13.6 H7 Z M13 4.4 V13.6" fill="none" stroke="#6d8fd0" stroke-width="1"/><rect x="12" y="4" width="2" height="1" fill="#3a62b0"/><rect x="12" y="6" width="2" height="1" fill="#3a62b0"/><rect x="12" y="8" width="2" height="1" fill="#3a62b0"/><path d="M0.8 2.2 L9.8 1 V10.4 L0.8 9.4 Z" fill="#1f9a2a" stroke="#0c6a14" stroke-width=".6"/><path d="M3.4 2.6 L9.2 2 V9.4 L3.4 8.8Z" fill="#d8f2c8"/><path d="M4.4 3.6 L8.2 8 M8.2 3.4 L4.4 8.2" stroke="#0c7a18" stroke-width="1.5"/></svg>

<div class="b" style="left:932px;top:494px;width:23px"></div>
<svg style="left:936px;top:496px" width="14" height="15" viewBox="0 0 14 15"><path d="M1.8 1.6 H9.6 L13 5 V14.4 H1.8 Z" fill="#8c8c98" opacity=".7"/><path d="M0.8 0.8 H8.6 L11.8 4 V13.6 H0.8 Z" fill="#fbfcff" stroke="#5c6a9c" stroke-width="1.1"/><path d="M8.6 0.8 V4 H11.8" fill="#dfe4f4" stroke="#5c6a9c" stroke-width=".9"/><rect x="2.2" y="7" width="8.2" height="5.4" fill="#aeb8dc"/><rect x="2.2" y="5.2" width="8.2" height="1" fill="#c8d0ea"/></svg>

<div class="b" style="left:958px;top:494px;width:23px"></div>
<svg style="left:961px;top:496px" width="17" height="15" viewBox="0 0 17 15"><rect x=".6" y=".6" width="13" height="13" rx="1.4" fill="#fdfdff" stroke="#1e90ff" stroke-width="1.2"/><rect x="1" y="1" width="12.2" height="2.4" fill="#1e90ff"/><rect x="1.6" y="1.6" width="11" height=".8" fill="#9ad0ff"/><path d="M1.4 6 H13 M1.4 8.4 H13 M1.4 10.8 H13 M7 3.6 V13 M9.8 3.6 V13" stroke="#b8b8e0" stroke-width=".7"/><rect x="3" y="3.6" width="2" height="9.6" fill="#f07a3a"/><path d="M3 6 H5 M3 8.4 H5 M3 10.8 H5" stroke="#ffd0a0" stroke-width=".7"/><path d="M5 5.6 L8.4 3 Q10 1.6 12.6 2.2 L16 3 Q16.8 4.6 16 6.6 Q14.6 8.8 11.6 9 Q9 9 7.6 7.2 L5.4 7 Z" fill="#e2aa4c" stroke="#b07a20" stroke-width=".6"/><path d="M8.6 4 Q11 3 13.4 3.6" stroke="#f8d890" stroke-width=".8" fill="none"/></svg>

<div class="b" style="left:984px;top:494px;width:23px"></div>
<svg style="left:987px;top:496px" width="15" height="15" viewBox="0 0 15 15"><rect x="1.4" y="1.6" width="13.2" height="13" rx="1.4" fill="#707078" opacity=".6"/><rect x=".7" y=".7" width="13" height="13" rx="1.4" fill="#fdfbff" stroke="#1e90ff" stroke-width="1.3"/><rect x="1.2" y="1.2" width="12" height="2" fill="#1e90ff"/><rect x="1.8" y="1.8" width="10.8" height=".7" fill="#9ad0ff"/><path d="M4.6 3.8 L6.8 6.4 H5.6 V12 H3.6 V6.4 H2.4 Z" fill="#f01818"/><path d="M9.8 12.2 L7.6 9.6 H8.8 V4 H10.8 V9.6 H12 Z" fill="#0c8a2c"/></svg>

<div class="b" style="left:1010px;top:494px;width:23px"></div>
<svg style="left:1014px;top:498px" width="14" height="11" viewBox="0 0 14 11"><path d="M1 4.4 Q1.6 1 6 0.8 Q11.6 0.8 12.8 4.6 Q13.6 8.6 9.6 10 Q6.6 10.8 6 8.6 Q5.6 7 3.4 7.2 Q0.8 7 1 4.4 Z" fill="#f2b24e" stroke="#d89038" stroke-width=".5"/><path d="M6 8.4 Q8 10.4 10.4 9.4 Q12.6 8 12.4 5.6 Q11 8.4 6 8.4Z" fill="#f6dc58"/><ellipse cx="4.6" cy="3.2" rx="1.5" ry="1" fill="#3a78e0"/><ellipse cx="8.8" cy="3" rx="1.5" ry="1.1" fill="#2aa838"/><ellipse cx="10.6" cy="6.6" rx="1.4" ry=".9" fill="#ee3a4a"/></svg>

<div class="b" style="left:1036px;top:494px;width:23px"></div>
<svg style="left:1040px;top:497px" width="15" height="12" viewBox="0 0 15 12"><path d="M1 6.4 L3.4 2 L9.4 0.8 L14 5.4 L13.4 8.6 L6.8 11 L1.2 8.8 Z" fill="url(#gs)"/><path d="M3.4 2 L9.4 0.8 L12.4 4.4 L5.4 6.2 Z" fill="#fbfbfb"/><path d="M1 6.4 L5.4 6.2 L6.8 11 L1.2 8.8Z" fill="#e8e8e8"/><path d="M5.4 6.2 L12.4 4.4 L14 5.4 L13.4 8.6 L6.8 11Z" fill="#b8b8b8"/><path d="M4.6 2.6 L7.4 1.4 L7.2 2.4 L9.8 2 L8.6 4.2 L7 4 L6.8 3.2 Z" fill="#2a86ea"/></svg>

<div class="b" style="left:1062px;top:494px;width:23px"></div>
<svg style="left:1066px;top:496px" width="15" height="15" viewBox="0 0 15 15"><g transform="translate(7.3 7.4)"><g fill="#b4b2e2" stroke="#8e8cc8" stroke-width=".5"><rect x="-1.5" y="-7" width="3" height="14" rx=".6"/><rect x="-1.5" y="-7" width="3" height="14" rx=".6" transform="rotate(45)"/><rect x="-1.5" y="-7" width="3" height="14" rx=".6" transform="rotate(90)"/><rect x="-1.5" y="-7" width="3" height="14" rx=".6" transform="rotate(135)"/></g><circle r="5.2" fill="#b4b2e2" stroke="#9c9ad2" stroke-width=".4"/><circle r="4" fill="#c6c4ec"/><circle r="1.7" fill="#ececf8" stroke="#9a98d0" stroke-width=".6"/></g></svg>

<div class="b" style="left:1088px;top:494px;width:23px"></div>
<svg style="left:1092px;top:496px" width="14" height="15" viewBox="0 0 14 15"><path d="M0.6 9.6 L3.6 6.6 H10.4 L13.2 9.4 V11.6 L7.4 14.6 L0.6 12 Z" fill="#9a9a9a"/><path d="M0.6 9.6 L3.6 6.6 H10.4 L13.2 9.4 L7.4 12.2 Z" fill="#f4f4f4"/><path d="M0.6 9.6 L7.4 12.2 V14.6 L0.6 12Z" fill="#d2d2d2"/><path d="M3.4 9.2 L10.2 9 L8 11 Z" fill="#5c5c5c"/><path d="M4.6 0.6 H8.8 V4.2 H11.4 L6.8 9.4 L2 4.2 H4.6 Z" fill="url(#gg)" stroke="#158c15" stroke-width=".6"/></svg>

<div class="b" style="left:1114px;top:494px;width:23px"></div>
<svg style="left:1118px;top:496px" width="14" height="15" viewBox="0 0 14 15"><rect x="1.6" y="1.4" width="11.4" height="13.4" rx="1.2" fill="#60606a" opacity=".7"/><rect x=".7" y=".7" width="10.8" height="13" rx="1.3" fill="#f6f4fb" stroke="#1b66d6" stroke-width="1.3"/><rect x="3.4" y="3.6" width="3.6" height="3.6" fill="#fff" stroke="#c0c0d0" stroke-width=".5"/><rect x="3.4" y="8.6" width="3.6" height="3.6" fill="#fff" stroke="#c0c0d0" stroke-width=".5"/><path d="M3.4 4.6 L5.4 6.6 L9.2 2" stroke="#e01818" stroke-width="1.3" fill="none"/><path d="M3.4 9.4 L5.4 11.6 L9.2 7" stroke="#e01818" stroke-width="1.3" fill="none"/></svg>

<div class="sep" style="left:1145px"></div>
<div class="b" style="left:1152px;top:494px;width:23px"></div>
<div class="abs" style="left:1157px;top:498px;width:12px;height:12px;background:#fff;border:1px solid #707070"></div>
<svg style="left:1158px;top:498px" width="12" height="11"><path d="M1 5.4 L4 9.2 L10.6 0.8" stroke="#0a3ec2" stroke-width="2.2" fill="none"/></svg>
<div class="b" style="left:1178px;top:494px;width:23px"></div>
<div class="abs" style="left:1183px;top:498px;width:12px;height:12px;background:linear-gradient(135deg,#fff,#ececec);border:1px solid #707070"></div>
<div class="sep" style="left:1208px;top:493px;height:22px"></div>

<div class="b" style="left:1215px;top:494px;width:98px"></div>
<svg style="left:1224px;top:496px" width="15" height="15" viewBox="0 0 15 15"><circle cx="7.8" cy="7.9" r="6.6" fill="#777" opacity=".35"/><circle cx="7.2" cy="7.2" r="6.2" fill="#cfeec4"/><circle cx="7.2" cy="7.2" r="2.6" fill="#e6e6e6"/><path d="M6.05 0.70 L6.76 0.61 L7.48 0.61 L8.19 0.67 L8.89 0.82 L9.57 1.04 L10.22 1.33 L10.83 1.69 L11.41 2.11 L11.93 2.60 L12.40 3.14 L13.35 2.40 L12.10 7.37 L8.78 5.97 L9.72 5.23 L9.49 4.97 L9.24 4.73 L8.96 4.53 L8.66 4.35 L8.35 4.21 L8.02 4.11 L7.68 4.04 L7.33 4.00 L6.99 4.01 L6.64 4.05 Z" fill="url(#gg)" stroke="#1c8a1c" stroke-width=".6" stroke-linejoin="round"/><path d="M13.40 9.46 L13.12 10.11 L12.77 10.74 L12.36 11.32 L11.88 11.85 L11.35 12.33 L10.78 12.75 L10.16 13.10 L9.50 13.39 L8.82 13.60 L8.12 13.74 L8.29 14.92 L4.60 11.36 L7.48 9.18 L7.65 10.37 L7.98 10.30 L8.32 10.20 L8.63 10.06 L8.93 9.89 L9.21 9.69 L9.47 9.45 L9.70 9.20 L9.90 8.91 L10.07 8.61 L10.21 8.29 Z" fill="url(#gg)" stroke="#1c8a1c" stroke-width=".6" stroke-linejoin="round"/><path d="M2.14 11.44 L1.72 10.87 L1.35 10.26 L1.06 9.61 L0.83 8.93 L0.68 8.23 L0.61 7.52 L0.61 6.81 L0.69 6.10 L0.85 5.40 L1.08 4.73 L-0.03 4.28 L4.90 2.87 L5.35 6.45 L4.23 6.00 L4.12 6.33 L4.04 6.67 L4.01 7.01 L4.00 7.36 L4.04 7.70 L4.11 8.04 L4.22 8.37 L4.36 8.68 L4.54 8.98 L4.75 9.26 Z" fill="url(#gg)" stroke="#1c8a1c" stroke-width=".6" stroke-linejoin="round"/></svg>
<div class="t" style="left:1244px;top:497px;letter-spacing:-0.16px">F5-Atuali<u>z</u>ar</div>

<div class="b" style="left:1316px;top:494px;width:83px"></div>
<svg style="left:1325px;top:496px" width="16" height="15" viewBox="0 0 16 15"><path d="M0.8 2.6 Q7 -0.6 14 2.2 L9 8 V13.6 L6 14.6 V8 Z" fill="url(#gs)" stroke="#5a5a5a" stroke-width=".5"/><ellipse cx="7.4" cy="2.4" rx="6.4" ry="1.7" fill="#6a6a6a"/><ellipse cx="7.4" cy="2" rx="6" ry="1.2" fill="#c8c8c8"/><path d="M7.4 9.8 L9.6 12.6 L14.4 6.4" stroke="#1466e6" stroke-width="2.2" fill="none"/></svg>
<div class="t" style="left:1344px;top:497px;letter-spacing:-0.12px">F9-Filtros</div>
<div class="b" style="left:1401px;top:494px;width:11px"></div>
<svg style="left:1403px;top:502px" width="7" height="4"><use href="#dd"/></svg>

<!-- scrollbar arrows -->
<svg style="left:1400px;top:99px" width="9" height="7"><path d="M1.2 5.8 L4.5 2.2 L7.8 5.8" stroke="#5a5a5a" stroke-width="2" fill="none"/></svg>
<svg style="left:1400px;top:452px" width="9" height="7"><path d="M1.2 1.4 L4.5 5 L7.8 1.4" stroke="#5a5a5a" stroke-width="2" fill="none"/></svg>
<svg style="left:218px;top:468px" width="6" height="9"><path d="M5 .8 L1.2 4.5 L5 8.2" stroke="#505050" stroke-width="1.7" fill="none"/></svg>
<svg style="left:1385px;top:468px" width="6" height="9"><path d="M1 .8 L4.8 4.5 L1 8.2" stroke="#505050" stroke-width="1.7" fill="none"/></svg>


<div class="bdg" style="left:96px;top:303px"><div class="bsh"></div><div class="bbl">4</div></div>
<div class="bdg" style="left:96px;top:348px"><div class="bsh"></div><div class="bbl">3</div></div>
<div class="bdg" style="left:96px;top:393px"><div class="bsh"></div><div class="bbl">2</div></div>
<div class="bdg" style="left:96px;top:439px"><div class="bsh"></div><div class="bbl">1</div></div>
<div class="bdg" style="left:307px;top:627px"><div class="bsh"></div><div class="bbl">5</div></div>
<div class="bdg" style="left:410px;top:627px"><div class="bsh"></div><div class="bbl">6</div></div>
<div class="bdg" style="left:514px;top:627px"><div class="bsh"></div><div class="bbl">7</div></div>
<div class="bdg" style="left:638px;top:627px"><div class="bsh"></div><div class="bbl">8</div></div>
<svg style="left:0;top:0" width="1450" height="704" viewBox="0 0 1450 704"><g font-family="Liberation Sans" font-weight="bold" font-size="17.2" fill="#00249c" stroke="#00249c" stroke-width="1.1" stroke-linejoin="round"><text x="36.9" y="325.5" textLength="55.4" lengthAdjust="spacingAndGlyphs">Excluir</text><text x="12" y="370.5" textLength="80.3" lengthAdjust="spacingAndGlyphs">Consultar</text><text x="33" y="415.5" textLength="59.3" lengthAdjust="spacingAndGlyphs">Alterar</text><text x="39.8" y="461.5" textLength="52.5" lengthAdjust="spacingAndGlyphs">Incluir</text><text x="269.5" y="681.6" textLength="108.6" lengthAdjust="spacingAndGlyphs">Movimentos</text><text x="393.8" y="681.6" textLength="64" lengthAdjust="spacingAndGlyphs">Origem</text><text x="474" y="681.6" textLength="113" lengthAdjust="spacingAndGlyphs">Mov.estoque</text><text x="602" y="681.6" textLength="105" lengthAdjust="spacingAndGlyphs">Gera NF Ret</text></g></svg><!-- annotations -->
<svg style="left:0;top:0" width="1450" height="704" viewBox="0 0 1450 704"><g fill="#00249c">
<path d="M125.48 326.25 L171.60 344.98 L175.47 346.09 L227.25 367.41 L535.23 494.62 L535.57 493.78 L227.65 366.44 L175.93 344.98 L172.40 343.04 L126.52 323.75 Z"/>
<path d="M125.50 370.76 L171.61 388.69 L175.50 389.74 L227.59 410.29 L437.23 493.22 L437.57 492.38 L227.98 409.31 L175.94 388.63 L172.39 386.74 L126.50 368.24 Z"/>
<path d="M125.52 415.26 L171.63 432.49 L175.52 433.49 L227.89 453.34 L336.04 494.42 L336.36 493.58 L228.26 452.36 L175.95 432.37 L172.37 430.53 L126.48 412.74 Z"/>
<path d="M125.61 460.79 L171.70 474.36 L175.66 475.09 L229.30 491.17 L235.07 492.83 L235.33 491.97 L229.60 490.16 L176.00 473.94 L172.30 472.35 L126.39 458.21 Z"/>
<path d="M313.24 628.11 L292.57 605.28 L275.78 586.74 L252.67 560.46 L233.74 538.90 L233.06 539.50 L251.88 561.15 L274.80 587.60 L290.91 606.72 L310.76 630.29 Z"/>
<path d="M416.05 628.13 L395.73 605.28 L379.12 586.60 L356.23 560.12 L337.94 538.91 L337.26 539.49 L355.44 560.80 L378.13 587.45 L394.06 606.72 L413.55 630.27 Z"/>
<path d="M520.25 628.12 L499.68 605.28 L482.94 586.70 L459.90 560.36 L440.64 538.30 L439.96 538.90 L459.10 561.05 L481.96 587.55 L498.02 606.72 L517.75 630.28 Z"/>
<path d="M644.19 628.05 L621.37 605.24 L603.67 587.57 L579.26 562.49 L556.72 539.29 L556.08 539.91 L578.50 563.22 L602.74 588.48 L619.79 606.76 L641.81 630.35 Z"/>
</g></svg>

</body>
</html>
